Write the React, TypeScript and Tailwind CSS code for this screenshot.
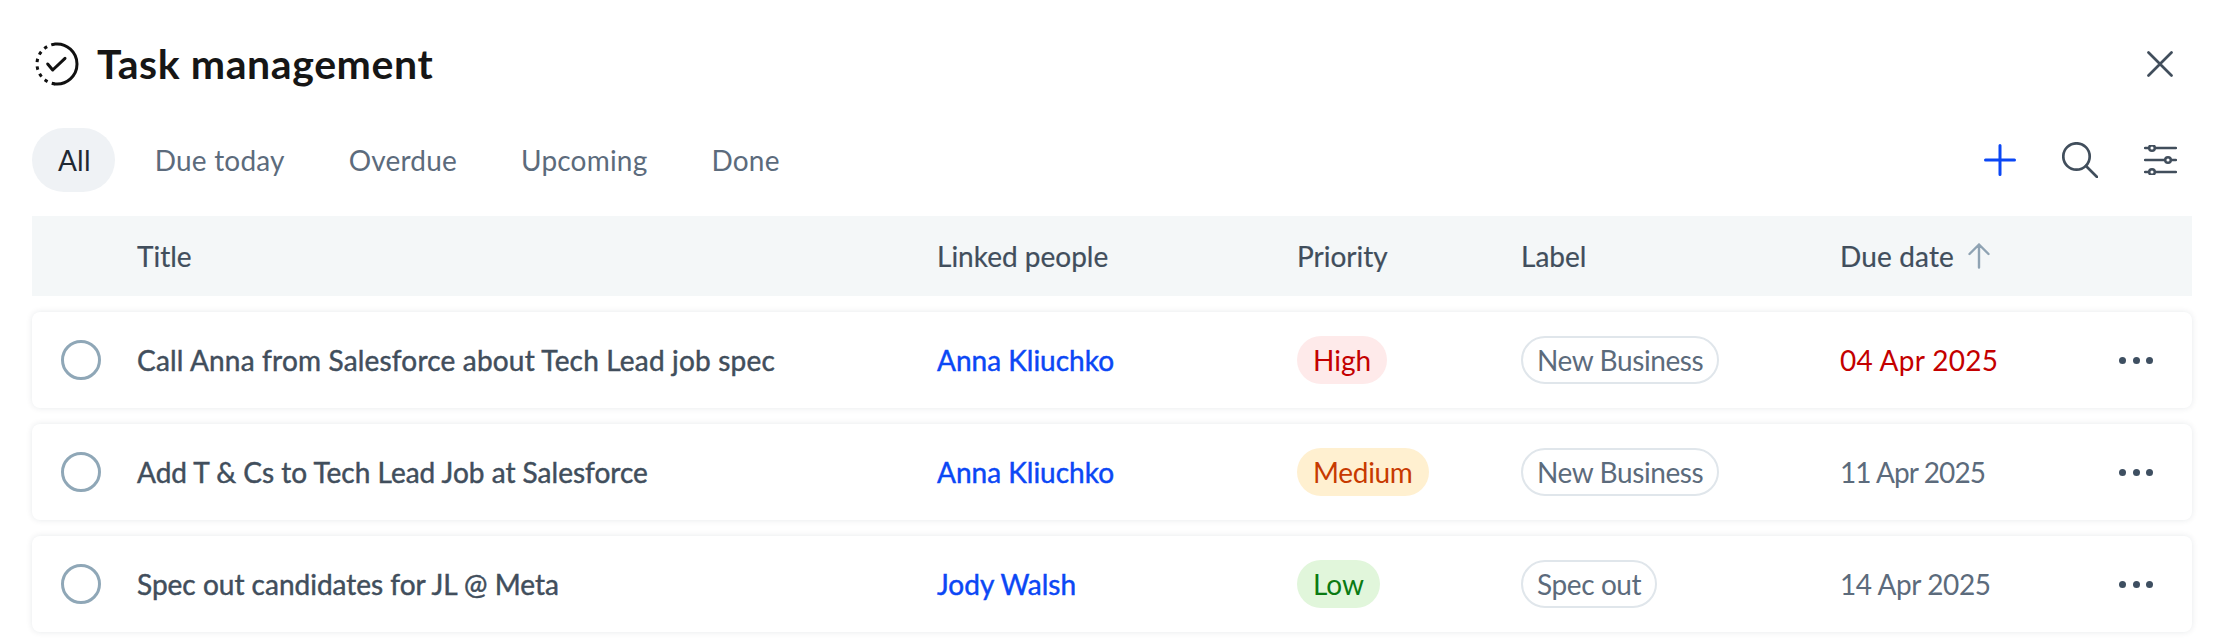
const rowGrid = 'grid grid-cols-[105px_800px_360px_224px_319px_1fr] items-center';

const tasks = [
    { title: 'Call Anna from Salesforce about Tech Lead job spec', titleClass: 'tracking-[0.18px]', person: 'Anna Kliuchko', priority: 'High', label: 'New Business', due: '04 Apr 2025', dueClass: 'text-[#c40000] tracking-[0.3px]' },
    { title: 'Add T & Cs to Tech Lead Job at Salesforce', titleClass: 'tracking-normal', person: 'Anna Kliuchko', priority: 'Medium', label: 'New Business', due: '11 Apr 2025', dueClass: 'text-[#5c6b7c] tracking-[-0.9px]' },
    { title: 'Spec out candidates for JL @ Meta', titleClass: 'tracking-normal', person: 'Jody Walsh', priority: 'Low', label: 'Spec out', due: '14 Apr 2025', dueClass: 'text-[#5c6b7c] tracking-[-0.4px]' },
];

const priorityClass: Record<string, string> = {
    High: 'bg-[#feeaea] text-[#c40000]',
    Medium: 'bg-[#fff0d0] text-[#c73a00] tracking-[-0.3px]',
    Low: 'bg-[#e1f6db] text-[#0a7a12]',
};

const TaskIcon = () => (
    <svg width="44" height="44" viewBox="0 0 44 44" fill="none" stroke="#111" strokeWidth="3">
        <path d="M20 2.1 A20 20 0 1 1 20 41.9" strokeLinecap="round" />
        <path d="M20 41.9 A20 20 0 0 1 20 2.1" strokeDasharray="3.4 4.4" />
        <path d="M12.7 22 L17.7 28 L30 16.3" strokeLinecap="round" strokeLinejoin="round" />
    </svg>
);

const App = () => {
    return (
        <div className="h-[640px] w-[2225px] overflow-hidden bg-white pl-8 pr-[33px] pt-[42px] font-['Lato',sans-serif] text-[#414e5c]">
            <div className="flex h-11 items-center justify-between">
                <div className="flex items-center gap-[18px] pl-[3px]">
                    <TaskIcon />
                    <h1 className="text-[41px] font-bold tracking-[0.6px] text-[#161616]">Task management</h1>
                </div>
                <div className="flex w-12 justify-center mr-2">
                    <svg width="26" height="26" viewBox="0 0 26 26" stroke="#414e5c" strokeWidth="2.7" strokeLinecap="round">
                        <path d="M1.5 1.5 L24.5 24.5 M24.5 1.5 L1.5 24.5" />
                    </svg>
                </div>
            </div>

            <div className="mt-[42px] flex h-16 items-center justify-between">
                <div className="flex items-center gap-4 text-[28px] tracking-[0.2px] text-[#5c6b7c]">
                    <span className="flex h-16 items-center rounded-full bg-[#eff2f5] pl-[26px] pr-6 text-[#1f2933]">All</span>
                    <span className="px-6">Due today</span>
                    <span className="px-6">Overdue</span>
                    <span className="px-6">Upcoming</span>
                    <span className="px-6">Done</span>
                </div>
                <div className="flex items-center gap-8 pr-2">
                    <div className="flex w-12 justify-center">
                        <svg width="32" height="32" viewBox="0 0 32 32" stroke="#0b47f5" strokeWidth="3" strokeLinecap="round">
                            <path d="M16 1.5 V30.5 M1.5 16 H30.5" />
                        </svg>
                    </div>
                    <div className="flex w-12 justify-center">
                        <svg width="36" height="36" viewBox="0 0 36 36" fill="none" stroke="#414e5c" strokeWidth="2.7" strokeLinecap="round">
                            <circle cx="14.5" cy="14.5" r="13.2" />
                            <path d="M24 24 L35 35" />
                        </svg>
                    </div>
                    <div className="flex w-12 justify-center">
                        <svg width="33" height="30" viewBox="0 0 33 30" fill="none" stroke="#414e5c" strokeWidth="2.5" strokeLinecap="round">
                            <path d="M1 3 H32 M1 15 H32 M1 27 H32" />
                            <circle cx="8" cy="3" r="2.8" fill="#fff" />
                            <circle cx="24" cy="15" r="2.8" fill="#fff" />
                            <circle cx="8" cy="27" r="2.8" fill="#fff" />
                        </svg>
                    </div>
                </div>
            </div>

            <div className={`${rowGrid} mt-6 h-20 bg-[#f4f7f8] text-[28px] [-webkit-text-stroke:0.2px]`}>
                <span />
                <span>Title</span>
                <span>Linked people</span>
                <span>Priority</span>
                <span>Label</span>
                <span className="flex items-center gap-[14px] tracking-[0.15px]">
                    Due date
                    <svg width="22" height="26" viewBox="0 0 22 26" fill="none" stroke="#8fa3b3" strokeWidth="2.4" strokeLinecap="round" strokeLinejoin="round">
                        <path d="M11 24.5 V1.5 M1.5 11 L11 1.5 L20.5 11" />
                    </svg>
                </span>
            </div>

            <div className="mt-4 flex flex-col gap-4">
                {tasks.map((task) => (
                    <div key={task.title} className={`${rowGrid} h-24 rounded-lg bg-white text-[28px] shadow-[0_0_6px_rgba(20,40,60,0.1)]`}>
                        <div className="pl-[29px]">
                            <div className="size-10 rounded-full border-[3px] border-[#8fa7b7]" />
                        </div>
                        <span className={`[-webkit-text-stroke:0.45px] ${task.titleClass}`}>{task.title}</span>
                        <span className="text-[#0b47f5] [-webkit-text-stroke:0.45px]">{task.person}</span>
                        <div>
                            <span className={`inline-flex h-12 items-center rounded-full px-4 ${priorityClass[task.priority]}`}>{task.priority}</span>
                        </div>
                        <div>
                            <span className="inline-flex h-12 items-center rounded-full border-2 border-[#e0e6eb] px-[14px] tracking-[-0.4px] text-[#5c6b7c]">{task.label}</span>
                        </div>
                        <div className="flex items-center justify-between pr-[39px]">
                            <span className={task.dueClass}>{task.due}</span>
                            <div className="flex gap-[6.5px]">
                                <span className="size-[7px] rounded-full bg-[#3e4f61]" />
                                <span className="size-[7px] rounded-full bg-[#3e4f61]" />
                                <span className="size-[7px] rounded-full bg-[#3e4f61]" />
                            </div>
                        </div>
                    </div>
                ))}
            </div>
        </div>
    );
};

export default App;
